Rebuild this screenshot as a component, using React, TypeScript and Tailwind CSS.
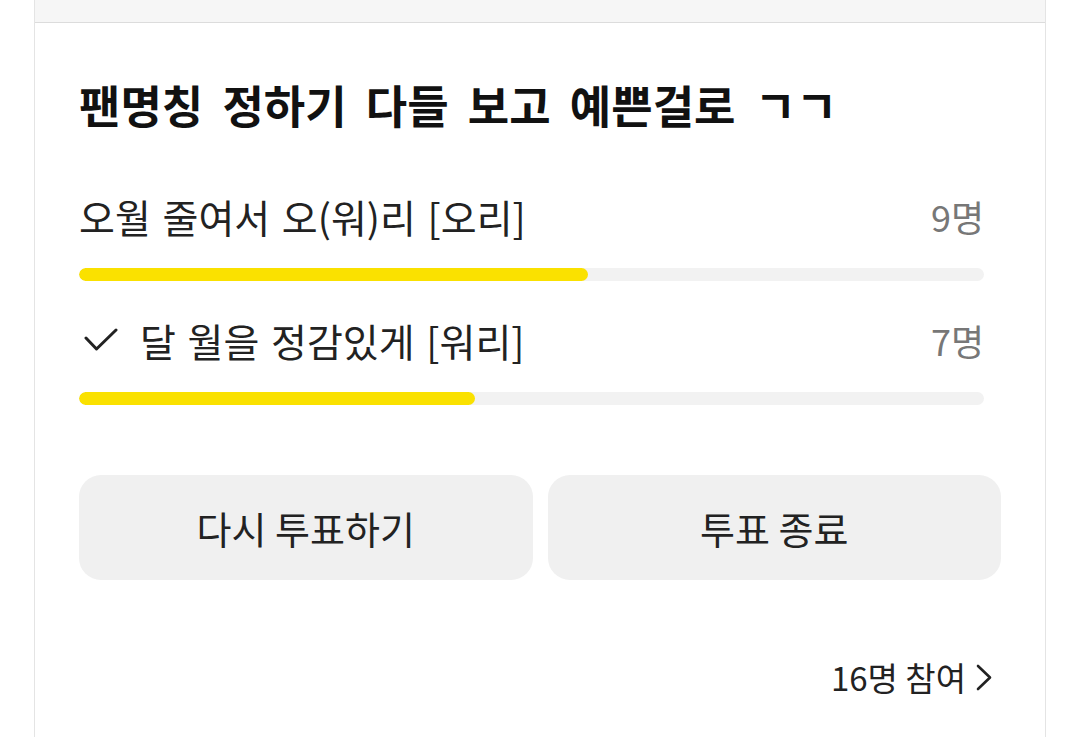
type Option = {
  id: string;
  label: string;
  votes: number;
  mine?: boolean;
};

const options: Option[] = [
  { id: "ori", label: "오월 줄여서 오(워)리 [오리]", votes: 9 },
  { id: "wori", label: "달 월을 정감있게 [워리]", votes: 7, mine: true },
];

const total = 16;

function CheckMark() {
  return (
    <svg width="34" height="24" viewBox="0 0 34 24" fill="none" className="ml-[5px] mr-[22px] shrink-0">
      <path d="M2 10 L12.5 21 L32 2" stroke="#222" strokeWidth="3" strokeLinecap="round" strokeLinejoin="round" />
    </svg>
  );
}

function Chevron() {
  return (
    <svg width="18" height="27" viewBox="0 0 18 27" fill="none" className="ml-[9px] shrink-0">
      <path d="M3 2 L15 13.5 L3 25" stroke="#222" strokeWidth="2.6" strokeLinecap="round" strokeLinejoin="round" />
    </svg>
  );
}

export default function App() {
  return (
    <div className="min-h-screen bg-white font-['Noto_Sans_CJK_KR','Noto_Sans',sans-serif] text-[#222]">
      <div className="ml-[34px] w-[1012px] border-x border-[#e4e4e4]">
        <div className="h-[23px] border-b border-[#dcdcdc] bg-[#f6f6f6]" />

        <div className="px-[44px] pb-[40px] pt-[58px]">
          <h2 className="text-[45px] font-bold leading-[48px] text-[#111] [word-spacing:9px]">
            팬명칭 정하기 다들 보고 예쁜걸로 ㄱㄱ
          </h2>

          <ul className="mt-[65px] flex flex-col gap-[37px]">
            {options.map((opt) => (
              <li key={opt.id} className="pr-[17px]">
                <div className="flex h-[44px] items-center justify-between">
                  <div className="flex items-center">
                    {opt.mine && <CheckMark />}
                    <span className="text-[39px] leading-[44px] [word-spacing:3px]">{opt.label}</span>
                  </div>
                  <span className="text-[36px] leading-[44px] text-[#777]">{opt.votes}명</span>
                </div>
                <div className="mt-[30px] h-[13px] overflow-hidden rounded-full bg-[#f2f2f2]">
                  <div
                    className="h-full rounded-full bg-[#fae100]"
                    style={{ width: `${(opt.votes / total) * 100}%` }}
                  />
                </div>
              </li>
            ))}
          </ul>

          <div className="mt-[70px] grid grid-cols-2 gap-[15px]">
            <button className="h-[105px] rounded-[22px] bg-[#f0f0f0] text-[38px] text-[#222]">
              다시 투표하기
            </button>
            <button className="h-[105px] rounded-[22px] bg-[#f0f0f0] text-[38px] text-[#222]">
              투표 종료
            </button>
          </div>

          <div className="mt-[77px] flex items-center justify-end pr-[8px]">
            <span className="text-[33px] leading-[40px]">16명 참여</span>
            <Chevron />
          </div>
        </div>
      </div>
    </div>
  );
}
